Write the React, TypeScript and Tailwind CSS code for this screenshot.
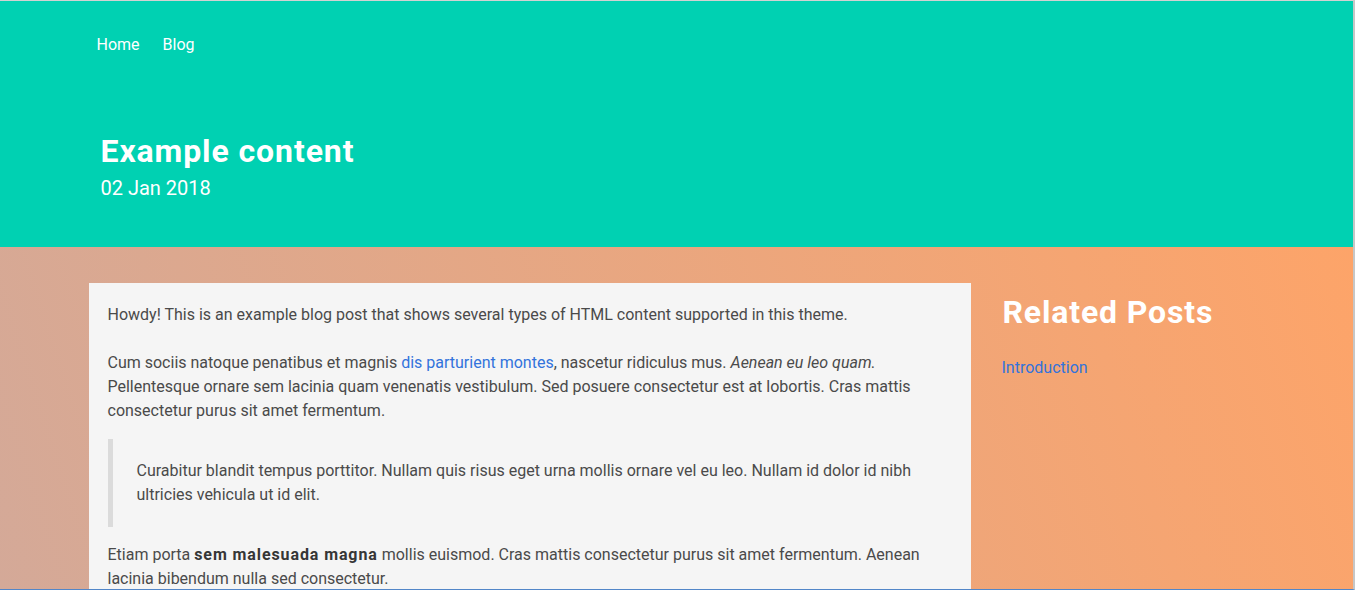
export default function App() {
  return (
    <div className="h-[590px] overflow-hidden border-t border-t-[#d2d2d2] border-r-2 border-r-[#c6c6c6] border-b border-b-[#5286c8] font-['Roboto',sans-serif] text-base">
      {/* Hero */}
      <header className="h-[246px] bg-[#00d1b2] text-white">
        <div className="w-[1176px] mx-auto">
          <nav className="flex pt-8 pl-[8px] leading-6">
            <a href="#" className="mr-[23px]">Home</a>
            <a href="#">Blog</a>
          </nav>
          <div className="pl-3 pt-[74px]">
            <h1 className="text-[32px] leading-10 font-bold tracking-[0.9px]">Example content</h1>
            <p className="mt-[2px] text-[20px] leading-[30px]">02 Jan 2018</p>
          </div>
        </div>
      </header>

      {/* Body */}
      <main className="h-[343px] bg-[linear-gradient(72deg,#d4a998,#fda469)]">
        <div className="w-[1176px] mx-auto flex pt-9">
          <article className="w-[882px] shrink-0 bg-[#f5f5f5] px-[19px] pt-5 pb-10 text-[#4a4a4a] leading-6">
            <p className="mb-6">
              Howdy! This is an example blog post that shows several types of HTML content supported in this theme.
            </p>
            <p className="mb-4">
              Cum sociis natoque penatibus et magnis{" "}
              <a href="#" className="text-[#3273dc]">dis parturient montes</a>, nascetur ridiculus mus.{" "}
              <em>Aenean eu leo quam.</em> Pellentesque ornare sem lacinia quam venenatis vestibulum. Sed posuere
              consectetur est at lobortis. Cras mattis consectetur purus sit amet fermentum.
            </p>
            <blockquote className="mb-4 border-l-[5px] border-[#dbdbdb] py-5 px-6">
              Curabitur blandit tempus porttitor. Nullam quis risus eget urna mollis ornare vel eu leo. Nullam id dolor
              id nibh ultricies vehicula ut id elit.
            </blockquote>
            <p>
              Etiam porta{" "}
              <strong className="font-bold tracking-[0.9px] text-[#363636]">sem malesuada magna</strong> mollis
              euismod. Cras mattis consectetur purus sit amet fermentum. Aenean lacinia bibendum nulla sed consectetur.
            </p>
          </article>

          <aside className="pl-[31px] pt-[9px]">
            <h2 className="ml-px text-[32px] leading-10 font-bold tracking-[0.85px] text-white">Related Posts</h2>
            <ul className="mt-6 leading-6">
              <li>
                <a href="#" className="text-[#3273dc]">Introduction</a>
              </li>
            </ul>
          </aside>
        </div>
      </main>
    </div>
  );
}
